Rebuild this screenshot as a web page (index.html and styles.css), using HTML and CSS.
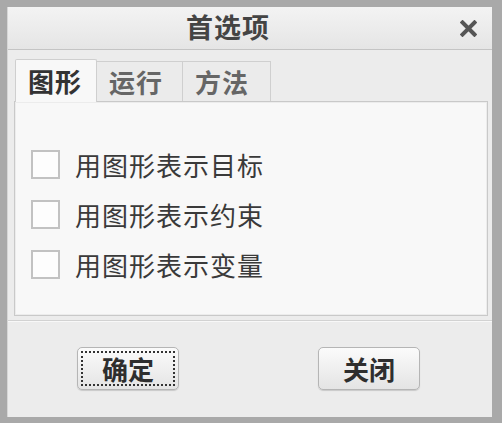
FILE: index.html
```html
<!DOCTYPE html>
<html lang="zh-CN">
<head>
    <meta charset="UTF-8">
    <title>首选项</title>
    <link rel="stylesheet" href="styles.css">
</head>
<body>
    <div class="dialog">
        <div class="title-bar">
            <span></span>
            <h1 class="title">首选项</h1>
            <span class="close">
                <svg width="17" height="17" viewBox="0 0 17 17">
                    <path d="M2.5 2.5 L14.5 14.5 M14.5 2.5 L2.5 14.5" stroke="#555" stroke-width="4" stroke-linecap="square"/>
                </svg>
            </span>
        </div>

        <div class="content">
            <div class="tabs">
                <div class="tab active">图形</div>
                <div class="tab">运行</div>
                <div class="tab">方法</div>
            </div>
            <div class="panel">
                <label class="option"><span class="check"></span>用图形表示目标</label>
                <label class="option"><span class="check"></span>用图形表示约束</label>
                <label class="option"><span class="check"></span>用图形表示变量</label>
            </div>
        </div>

        <div class="footer">
            <button class="btn focused"><span>确定</span></button>
            <button class="btn"><span>关闭</span></button>
        </div>
    </div>
</body>
</html>
```

FILE: styles.css
```css
* {
    margin: 0;
    padding: 0;
    box-sizing: border-box;
    font-family: "Noto Sans CJK SC", "Noto Sans", sans-serif;
}

body {
    background: #a9a9a9;
    width: 502px;
    height: 423px;
    overflow: hidden;
}

.dialog {
    margin: 7px 0 0 7px;
    width: 485px;
    height: 410px;
    background: #ececec;
    border-left: 1px solid #d6d6d6;
    display: flex;
    flex-direction: column;
}

.title-bar {
    height: 43px;
    flex: none;
    display: grid;
    grid-template-columns: 1fr auto 1fr;
    align-items: center;
    background: linear-gradient(to bottom, #f3f3f3, #e5e5e5);
    border-bottom: 1px solid #c4c4c4;
}

.title {
    font-size: 27px;
    font-weight: bold;
    color: #444;
    letter-spacing: 1px;
    line-height: 1;
    margin: -3px 44px 0 0;
}

.close {
    justify-self: end;
    margin-right: 15px;
    display: flex;
}

.content {
    padding: 9px 4px 0 6px;
}

.tabs {
    display: flex;
    align-items: flex-end;
    height: 42px;
    margin-left: 1px;
}

.tab {
    height: 40px;
    padding: 0 12px;
    font-size: 26px;
    font-weight: bold;
    color: #666;
    background: #ebebeb;
    border: 1px solid #cfcfcf;
    border-bottom: none;
    border-left: none;
    display: flex;
    align-items: center;
    line-height: 1;
    letter-spacing: 1px;
    width: 86px;
}

.tab.active {
    height: 43px;
    width: 82px;
    color: #333;
    background: #f8f8f8;
    border-left: 1px solid #cfcfcf;
    margin-bottom: -1px;
    position: relative;
    border-radius: 2px 2px 0 0;
}

.tab:last-child {
    width: 88px;
}

.panel {
    height: 215px;
    background: #f8f8f8;
    border: 1px solid #c9c9c9;
    box-shadow: inset 0 0 0 1px #ececec;
    padding: 37px 0 0 16px;
}

.option {
    display: flex;
    align-items: center;
    height: 50px;
    font-size: 26px;
    color: #3a3a3a;
    letter-spacing: 1px;
}

.check {
    width: 29px;
    height: 29px;
    border: 2px solid #c2c2c2;
    background: #fdfdfd;
    margin-right: 15px;
    flex: none;
}

.footer {
    flex: 1;
    margin-top: 4px;
    border-top: 1px solid #d2d2d2;
    box-shadow: inset 0 1px 0 #f8f8f8;
    display: flex;
    align-items: flex-start;
    padding: 26px 0 0 69px;
    gap: 139px;
}

.btn {
    width: 102px;
    height: 43px;
    border: 1px solid #b5b5b5;
    border-radius: 5px;
    background: linear-gradient(to bottom, #fbfbfb, #e4e4e4);
    box-shadow: 0 1px 1px rgba(0, 0, 0, 0.15);
    font-size: 26px;
    font-weight: bold;
    color: #2e2e2e;
    padding: 3px;
    display: flex;
}

.btn span {
    flex: 1;
    display: flex;
    align-items: center;
    justify-content: center;
    border: 2px dotted transparent;
    line-height: 1;
}

.btn.focused span {
    border-color: #333;
}
```
